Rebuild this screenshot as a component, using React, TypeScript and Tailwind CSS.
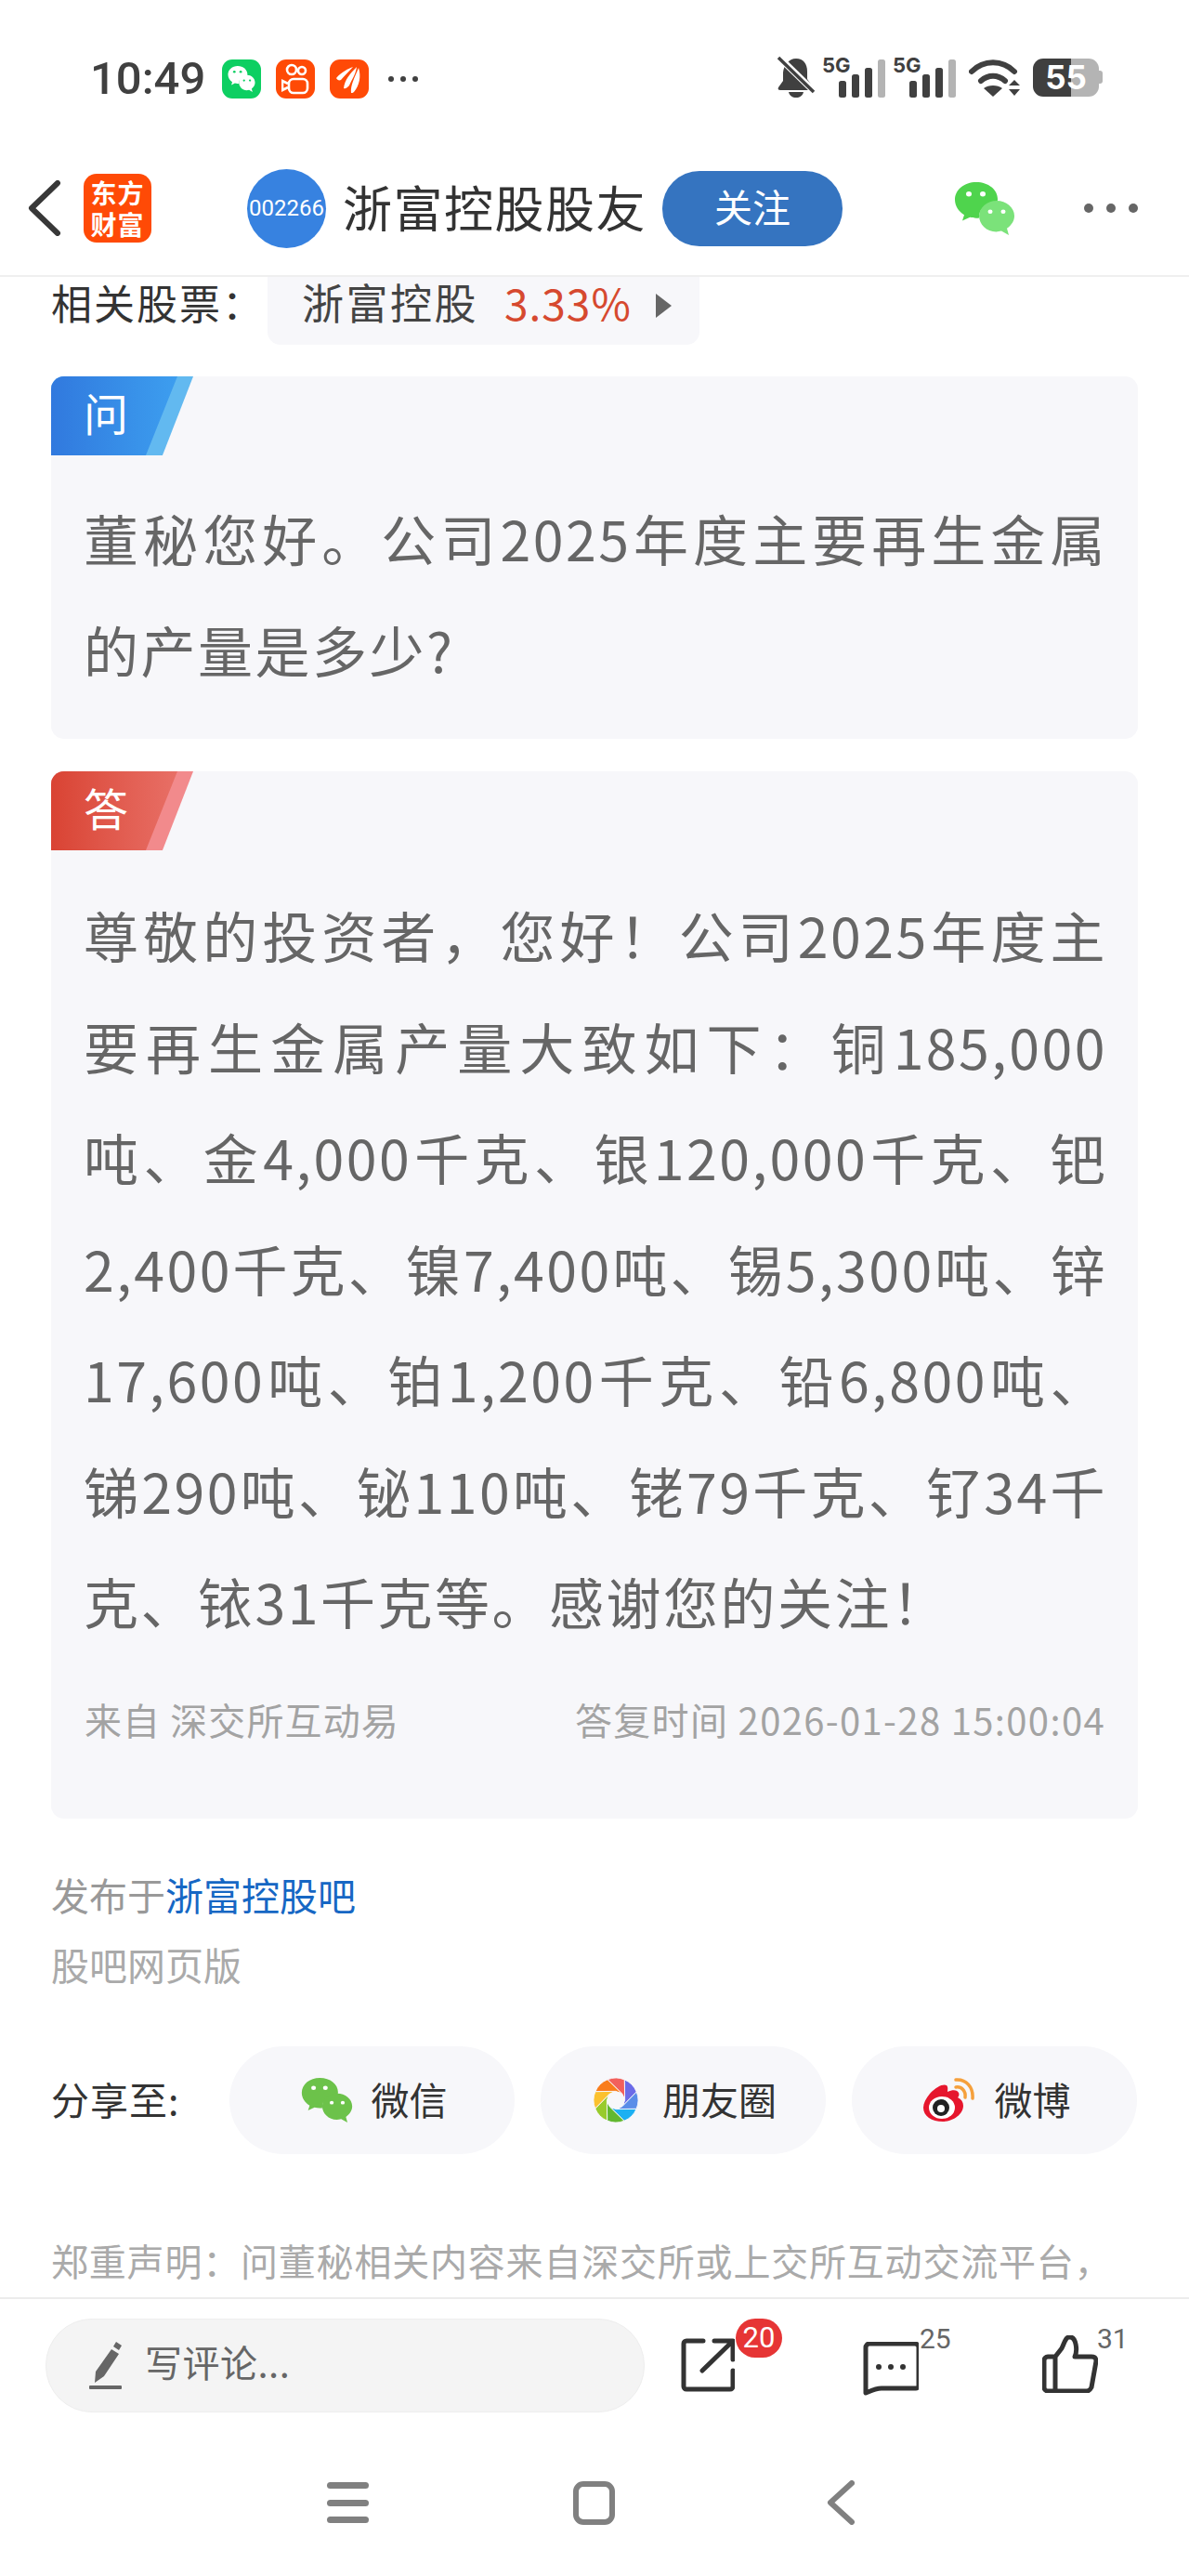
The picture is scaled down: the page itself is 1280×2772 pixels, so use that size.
import React from 'react';

const questionLines = ['董秘您好。公司2025年度主要再生金属', '的产量是多少?'];

// full-width punctuation written as escapes so it can't get normalised
const answerLines = [
  '尊敬的投资者\uFF0C您好\uFF01公司2025年度主',
  '要再生金属产量大致如下\uFF1A铜185,000',
  '吨、金4,000千克、银120,000千克、钯',
  '2,400千克、镍7,400吨、锡5,300吨、锌',
  '17,600吨、铂1,200千克、铅6,800吨、',
  '锑290吨、铋110吨、铑79千克、钌34千',
  '克、铱31千克等。感谢您的关注\uFF01',
];

const BubbleIcon = ({ className, c1, c2, eye }: { className: string; c1: string; c2: string; eye: string }) => (
  <svg className={className} viewBox="0 2 66 63" preserveAspectRatio="none">
    <path d="M24 2c13 0 23 9 23 20 0 2-.3 3-.8 5C35 26 27 34 27 43c0 .6 0 1 .1 1.6-1 .2-2 .2-3.100.2-2.500 0-4.500-.4-6.800-1L9 48l2-7C5 37 1 30 1 23 1 11 11 2 24 2z" fill={c1} />
    <path d="M46 24c10 0 19 8 19 18 0 6-3 11-8 15l2 8-8-5c-2 .5-4 1-5.500 1C35 61 27 52 27 42c0-10 9-18 19-18z" fill={c2} />
    <circle cx="16" cy="16" r="3" fill={eye} />
    <circle cx="31" cy="16" r="3" fill={eye} />
    <circle cx="39" cy="37" r="2.500" fill={eye} />
    <circle cx="53" cy="37" r="2.500" fill={eye} />
  </svg>
);

const BellOff = () => (
  <svg className="h-[46px] w-[42px]" viewBox="0 0 42 46">
    <path d="M21 3c8 0 12 6 12 14v8l6 9c1 2 0 3-2 3H4c-2 0-3-1-2-3l5-7v-9C8 10 13 3 21 3z" fill="#404040" />
    <path d="M13 39h16c-1 4-4 6-8 6s-7-2-8-6z" fill="#404040" />
    <path d="M2 1l38 37" stroke="#fff" strokeWidth="7" />
    <path d="M2 2l38 37" stroke="#404040" strokeWidth="3.500" />
  </svg>
);

const Signal = () => (
  <svg className="h-[46px] w-[68px] overflow-visible" viewBox="0 0 68 46">
    <text x="0" y="18" fontSize="22" fontWeight="700" fill="#404040" fontFamily="Inter, sans-serif">5G</text>
    <rect x="18" y="27" width="8" height="18" rx="2.500" fill="#404040" />
    <rect x="32" y="20" width="8" height="25" rx="2.500" fill="#404040" />
    <rect x="46" y="13" width="8" height="32" rx="2.500" fill="#404040" />
    <rect x="60" y="4" width="8" height="41" rx="2.500" fill="#b4b4b4" />
  </svg>
);

const Wifi = () => (
  <svg className="h-[42px] w-[56px]" viewBox="0 0 56 42">
    <path d="M3 15C16 2 36 2 49 15" fill="none" stroke="#404040" strokeWidth="6" strokeLinecap="round" />
    <path d="M13 25c8-7 18-7 26 0" fill="none" stroke="#404040" strokeWidth="6" strokeLinecap="round" />
    <path d="M16 33c5-4 15-4 20 0l-10 9z" fill="#404040" />
    <path d="M49 24l6 6H43zM49 41l6-7H43z" fill="#404040" />
  </svg>
);

const KuaishouIcon = () => (
  <div className="flex h-[42px] w-[42px] items-center justify-center rounded-[11px] bg-[#ff4a06]">
    <svg className="h-[34px] w-[30px]" viewBox="0 0 30 34" fill="none" stroke="#fff" strokeWidth="2.600">
      <circle cx="11" cy="7" r="5" />
      <circle cx="22" cy="8" r="4" />
      <rect x="8" y="17" width="20" height="15" rx="5" />
      <path d="M7 22l-6-3v10l6-3" />
    </svg>
  </div>
);

const LeafIcon = () => (
  <div className="flex h-[42px] w-[42px] items-center justify-center rounded-[11px] bg-[#ff4a06]">
    <svg className="h-[32px] w-[30px]" viewBox="0 0 30 32" fill="#fff">
      <path d="M1 15C7 8 14 5 19 3c-4 5-9 9-13 14-2 1-4 0-5-2z" />
      <path d="M9 26c1-9 7-16 14-23-1 8-5 13-8 20-2 2-4 4-6 3z" />
      <path d="M17 31c-1-8 4-17 8-27 3 9 1 19-5 26-1 1-2 1-3 1z" />
    </svg>
  </div>
);

const StatusBar = () => (
  <div className="flex h-[180px] items-start justify-between pl-[97px] pr-[93px] pt-[60px]">
    <div className="flex items-center">
      <span className="w-[123px] text-[49px] font-medium leading-[50px] text-[#404040] [font-family:Roboto,sans-serif]">10:49</span>
      <div className="ml-[19px] flex items-center gap-[16px]">
        <div className="flex h-[42px] w-[42px] items-center justify-center rounded-[11px] bg-[#0dcf62]">
          <BubbleIcon className="h-[28px] w-[30px]" c1="#fff" c2="#fff" eye="#0dcf62" />
        </div>
        <KuaishouIcon />
        <LeafIcon />
      </div>
      <div className="ml-[21px] flex gap-[7px]">
        <span className="h-[6px] w-[6px] rounded-full bg-[#404040]" />
        <span className="h-[6px] w-[6px] rounded-full bg-[#404040]" />
        <span className="h-[6px] w-[6px] rounded-full bg-[#404040]" />
      </div>
    </div>
    <div className="flex items-center">
      <BellOff />
      <div className="ml-[7px]"><Signal /></div>
      <div className="ml-[8px]"><Signal /></div>
      <div className="ml-[14px]"><Wifi /></div>
      <div className="ml-[13px] flex items-center">
        <div className="flex h-[41px] w-[71px] items-center justify-center rounded-[11px] bg-[linear-gradient(90deg,#3f3f3f_58%,#b4b4b4_58%)] text-[35px] font-bold text-white [font-family:Inter,sans-serif]">55</div>
        <div className="h-[14px] w-[4px] rounded-r-[3px] bg-[#b4b4b4]" />
      </div>
    </div>
  </div>
);

const Header = () => (
  <div className="flex h-[118px] items-center border-b-2 border-[#efefef] pb-[28px] pl-[30px]">
    <svg className="h-[60px] w-[36px]" viewBox="0 0 36 60" fill="none" stroke="#383838" strokeWidth="6" strokeLinecap="round" strokeLinejoin="round">
      <path d="M32 3L4 30l28 27" />
    </svg>
    <div className="ml-[24px] flex h-[74px] w-[73px] items-center justify-center rounded-[14px] bg-[#ff4a06] text-center text-[28px] font-bold leading-[34px] tracking-[1px] text-white">
      <span>东方<br />财富</span>
    </div>
    <div className="ml-[103px] flex h-[85px] w-[85px] items-center justify-center rounded-full bg-[#3782e0] text-[24px] text-white [font-family:Roboto,sans-serif]">002266</div>
    <span className="ml-[18px] w-[327px] whitespace-nowrap pb-[4px] text-[53px] leading-[60px] tracking-[1.500px] text-[#333]">浙富控股股友</span>
    <div className="ml-[17px] flex h-[81px] w-[194px] items-center justify-center rounded-[40px] bg-[#3574c0] pb-[4px] text-[41px] text-white">关注</div>
    <BubbleIcon className="ml-[120px] h-[57px] w-[66px]" c1="#4fd44d" c2="#7be27a" eye="#fff" />
    <div className="ml-[74px] flex gap-[14px]">
      <span className="h-[10px] w-[10px] rounded-full bg-[#666]" />
      <span className="h-[10px] w-[10px] rounded-full bg-[#666]" />
      <span className="h-[10px] w-[10px] rounded-full bg-[#666]" />
    </div>
  </div>
);

const Tag = ({ label, light, grad }: { label: string; light: string; grad: string }) => (
  <div className={`h-[85px] w-[153px] [clip-path:polygon(0_0,100%_0,78.4%_100%,0_100%)] ${light}`}>
    <div className={`flex h-full w-[136px] items-center pb-[10px] pl-[35px] text-[48px] text-white [clip-path:polygon(0_0,100%_0,75%_100%,0_100%)] ${grad}`}>
      {label}
    </div>
  </div>
);

const Lines = ({ lines }: { lines: string[] }) => (
  <div className="pl-[35px] pr-[33px] text-[59px] leading-[119.5px] tracking-[2.500px] text-[#666]">
    {lines.map((line, i) => (
      <div key={i} className={i === lines.length - 1 ? 'whitespace-nowrap' : 'whitespace-nowrap text-justify [text-align-last:justify]'}>
        {line}
      </div>
    ))}
  </div>
);

const MomentsIcon = () => {
  const colors = ['#f2605c', '#6b6be8', '#5a8de8', '#1cb0f2', '#62b82f', '#98cb2c', '#fbc12e', '#f97d1c'];
  const pt = (r: number, deg: number) => {
    const a = ((deg - 90) * Math.PI) / 180;
    return `${(50 + r * Math.cos(a)).toFixed(2)} ${(50 + r * Math.sin(a)).toFixed(2)}`;
  };
  return (
    <svg className="h-[48px] w-[48px]" viewBox="0 0 100 100">
      {colors.map((c, i) => {
        const a = i * 45 - 22;
        return (
          <path
            key={c}
            d={`M${pt(50, a)}A50 50 0 0 1 ${pt(50, a + 45)}L${pt(20, a + 110)}L${pt(20, a + 65)}Z`}
            fill={c}
            stroke="#f7f7fa"
            strokeWidth="2"
          />
        );
      })}
      <circle cx="50" cy="50" r="20" fill="#f7f7fa" />
    </svg>
  );
};

const WeiboIcon = () => (
  <svg className="h-[48px] w-[56px]" viewBox="0 0 56 48">
    <path d="M8 17C15 9 23 6 26 8c2 2 1 5 1 7 6-3 11-2 12 1 1 2 0 4-1 5 4 2 6 5 6 9 0 9-11 17-22 17C10 47 1 41 1 32c0-5 3-10 7-15z" fill="#e6162d" />
    <ellipse cx="21" cy="32" rx="14" ry="12" fill="#fff" />
    <ellipse cx="20" cy="32" rx="9" ry="9" fill="#222" />
    <circle cx="20" cy="33" r="4" fill="#fff" />
    <path d="M36 10c6-1 11 4 10 11" fill="none" stroke="#f5a03c" strokeWidth="3.500" strokeLinecap="round" />
    <path d="M36 2c11-1 19 8 18 20" fill="none" stroke="#f5a03c" strokeWidth="3.500" strokeLinecap="round" />
  </svg>
);

const SharePill = ({ icon, label, gap }: { icon: React.ReactNode; label: string; gap: string }) => (
  <div className={`flex h-[116px] w-[307px] items-center justify-center rounded-[58px] bg-[#f7f7fa] pl-[4px] text-[41px] text-[#333] ${gap}`}>
    {icon}
    <span className="pb-[3px]">{label}</span>
  </div>
);

const BottomBar = () => (
  <div className="h-[300px] border-t-2 border-[#ececec] bg-white">
    <div className="flex items-start pl-[49px] pt-[21px]">
      <div className="flex h-[101px] w-[645px] items-center rounded-[50px] border border-[#eeeeee] bg-[#f4f4f4] pl-[46px]">
        <svg className="h-[52px] w-[36px]" viewBox="0 0 36 52" fill="#666">
          <path d="M24 8l8 5-16 24-10 7 1-12zM26 5l3-5 6 4-3 5z" />
          <rect x="0" y="47" width="35" height="4" rx="1" />
        </svg>
        <span className="ml-[24px] pb-[9px] text-[40px] tracking-[0.500px] text-[#666]">写评论...</span>
      </div>
      <div className="relative ml-[39px] mt-[21px] h-[58px] w-[58px]">
        <svg className="h-[58px] w-[58px]" viewBox="0 0 58 58" fill="none" stroke="#333" strokeWidth="5" strokeLinecap="round" strokeLinejoin="round">
          <path d="M24 3H6a3 3 0 0 0-3 3v46a3 3 0 0 0 3 3h47a3 3 0 0 0 3-3V35" />
          <path d="M36 3h20v20M55 4L23 35" />
        </svg>
        <span className="absolute left-[59px] top-[-21px] flex h-[42px] w-[50px] items-center justify-center rounded-[21px] bg-[#e63535] text-[31px] text-white [font-family:Roboto,sans-serif]">20</span>
      </div>
      <div className="relative ml-[138px] mt-[25px] h-[58px] w-[60px]">
        <svg className="h-[58px] w-[60px]" viewBox="0 0 60 58" fill="none" stroke="#333" strokeWidth="5" strokeLinecap="round" strokeLinejoin="round">
          <path d="M3 55V6a4 4 0 0 1 4-4h49a4 4 0 0 1 4 4v41a3 3 0 0 1-3 3H20c-6 0-10 2-17 5z" />
          <circle cx="17" cy="27" r="3" fill="#333" stroke="none" />
          <circle cx="30" cy="27" r="3" fill="#333" stroke="none" />
          <circle cx="43" cy="27" r="3" fill="#333" stroke="none" />
        </svg>
        <span className="absolute left-[61px] top-[-18px] text-[30px] leading-[30px] text-[#666] [font-family:Roboto,sans-serif]">25</span>
      </div>
      <div className="relative ml-[133px] mt-[18px] h-[62px] w-[60px]">
        <svg className="h-[62px] w-[60px]" viewBox="0 0 60 62" fill="none" stroke="#333" strokeWidth="5" strokeLinecap="round" strokeLinejoin="round">
          <path d="M14 23H6a4 4 0 0 0-4 4v29a4 4 0 0 0 4 4h42c3 0 4-2 5-4l5-28c0-3-1-5-5-5H35c3-6 2-22-6-21-4 0-5 6-8 12l-7 9zM14 23v37" />
        </svg>
        <span className="absolute left-[59px] top-[-11px] text-[30px] leading-[30px] text-[#666] [font-family:Roboto,sans-serif]">31</span>
      </div>
    </div>
    <div className="mt-[73px] flex items-center pl-[352px]">
      <div className="flex h-[44px] w-[45px] flex-col justify-between">
        <span className="h-[7px] rounded-full bg-[#808080]" />
        <span className="h-[7px] rounded-full bg-[#808080]" />
        <span className="h-[7px] rounded-full bg-[#808080]" />
      </div>
      <div className="ml-[220px] h-[47px] w-[45px] rounded-[11px] border-[6px] border-[#808080]" />
      <svg className="ml-[228px] h-[48px] w-[30px]" viewBox="0 0 30 48" fill="none" stroke="#808080" strokeWidth="6" strokeLinecap="round" strokeLinejoin="round">
        <path d="M27 3L4 24l23 21" />
      </svg>
    </div>
  </div>
);

export default function App() {
  return (
    <div className="flex h-[2772px] w-[1280px] flex-col overflow-hidden bg-white [font-family:'Noto_Sans_CJK_SC','Noto_Sans',sans-serif]">
      <StatusBar />
      <Header />
      <div className="min-h-0 flex-1 px-[55px]">
        <div className="flex h-[73px] items-start">
          <span className="w-[233px] whitespace-nowrap text-[44px] leading-[54px] tracking-[2px] text-[#333]">{'相关股票\uFF1A'}</span>
          <div className="flex h-[73px] w-[465px] items-start rounded-b-[14px] bg-[#f7f7fa] pl-[37px] text-[45px] leading-[54px] tracking-[2.500px] text-[#444]">
            <span>浙富控股</span>
            <span className="ml-[28px] text-[46px] tracking-[1px] text-[#d6492f]">3.33%</span>
            <span className="ml-[26px] mt-[18px] h-0 w-0 border-y-[13px] border-l-[17px] border-y-transparent border-l-[#666]" />
          </div>
        </div>

        <div className="mt-[34px] overflow-hidden rounded-[14px] bg-[#f7f7fa] pb-[37px]">
          <Tag label="问" light="bg-[#62b9f0]" grad="bg-gradient-to-r from-[#3179de] to-[#3d9eef]" />
          <div className="pt-[29px]">
            <Lines lines={questionLines} />
          </div>
        </div>

        <div className="mt-[35px] h-[1127px] overflow-hidden rounded-[14px] bg-[#f7f7fa]">
          <Tag label="答" light="bg-[#f28a8c]" grad="bg-gradient-to-r from-[#d94333] to-[#e86f66]" />
          <div className="pt-[31px]">
            <Lines lines={answerLines} />
          </div>
          <div className="mt-[37px] flex items-center justify-between pl-[36px] pr-[35px] text-[40px] leading-[60px] tracking-[1.100px] text-[#a3a3a3]">
            <span>来自 深交所互动易</span>
            <span className="tracking-[1.350px]">答复时间 2026-01-28 15:00:04</span>
          </div>
        </div>

        <div className="mt-[56px] text-[41px] leading-[50px] text-[#999]">
          发布于<span className="text-[#1667c4]">浙富控股吧</span>
        </div>
        <div className="mt-[25px] text-[41px] leading-[50px] text-[#aaa]">股吧网页版</div>

        <div className="mt-[64px] flex items-center">
          <span className="w-[192px] pb-[3px] text-[41px] tracking-[1px] text-[#333]">分享至:</span>
          <div className="flex gap-[28px]">
            <SharePill gap="gap-[20px]" icon={<BubbleIcon className="h-[48px] w-[56px]" c1="#6cc24a" c2="#6cc24a" eye="#fff" />} label="微信" />
            <SharePill gap="gap-[26px]" icon={<MomentsIcon />} label="朋友圈" />
            <SharePill gap="gap-[22px]" icon={<WeiboIcon />} label="微博" />
          </div>
        </div>

        <div className="mt-[84px] whitespace-nowrap text-[40px] leading-[60px] tracking-[0.800px] text-[#aaa]">
          {'郑重声明\uFF1A问董秘相关内容来自深交所或上交所互动交流平台\uFF0C'}
        </div>
      </div>
      <BottomBar />
    </div>
  );
}
